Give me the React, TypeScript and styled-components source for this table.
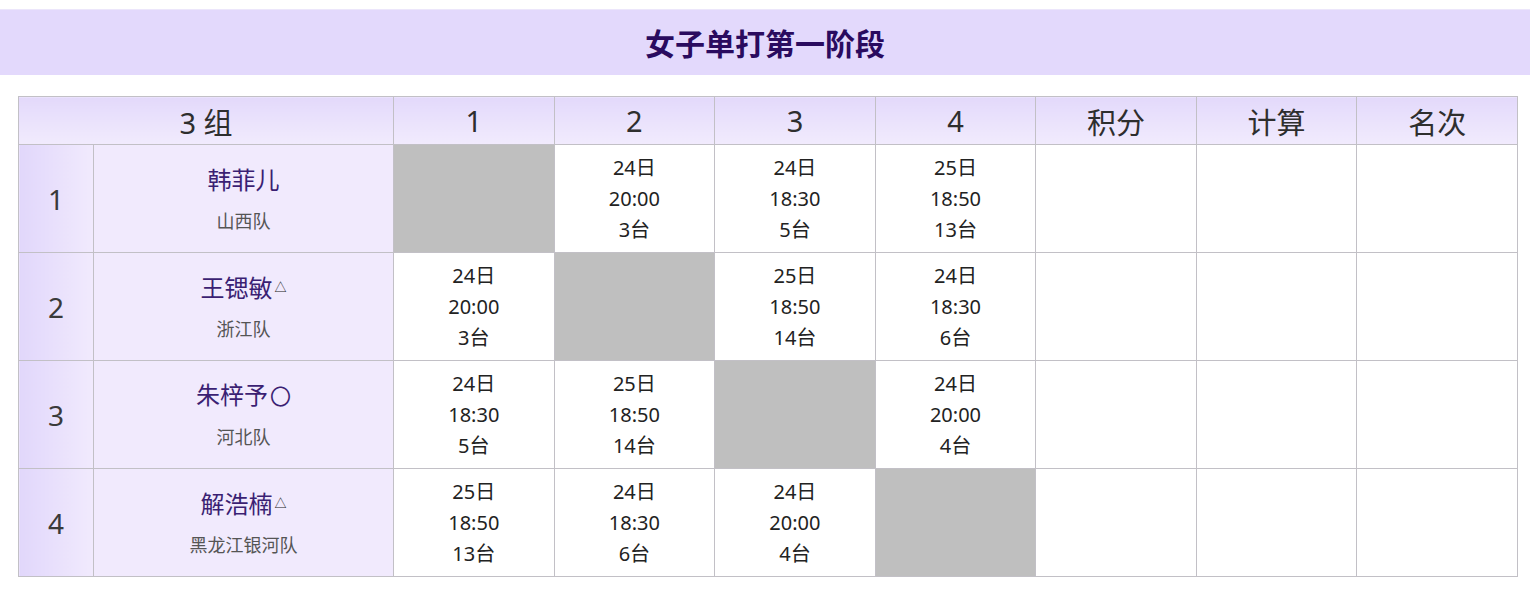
import React, { FC } from 'react';
import styled, { createGlobalStyle } from 'styled-components';

type Match = { day: string; time: string; court: string } | null;

type Player = {
  seed: number;
  name: string;
  mark?: 'triangle' | 'circle';
  team: string;
  matches: Match[];
};

const m = (day: string, time: string, court: string): Match => ({ day, time, court });

const players: Player[] = [
  {
    seed: 1,
    name: '韩菲儿',
    team: '山西队',
    matches: [null, m('24日', '20:00', '3台'), m('24日', '18:30', '5台'), m('25日', '18:50', '13台')],
  },
  {
    seed: 2,
    name: '王锶敏',
    mark: 'triangle',
    team: '浙江队',
    matches: [m('24日', '20:00', '3台'), null, m('25日', '18:50', '14台'), m('24日', '18:30', '6台')],
  },
  {
    seed: 3,
    name: '朱梓予',
    mark: 'circle',
    team: '河北队',
    matches: [m('24日', '18:30', '5台'), m('25日', '18:50', '14台'), null, m('24日', '20:00', '4台')],
  },
  {
    seed: 4,
    name: '解浩楠',
    mark: 'triangle',
    team: '黑龙江银河队',
    matches: [m('25日', '18:50', '13台'), m('24日', '18:30', '6台'), m('24日', '20:00', '4台'), null],
  },
];

const GlobalStyle = createGlobalStyle`
  html, body {
    margin: 0;
    padding: 0;
    background: #fff;
    font-family: "Noto Sans", "Noto Sans CJK SC", sans-serif;
  }
`;

const App: FC = () => {
  return (
    <Page>
      <GlobalStyle />
      <TitleBar>女子单打第一阶段</TitleBar>
      <TableWrap>
        <Grid>
          <colgroup>
            <col style={{ width: 75 }} />
            <col style={{ width: 300 }} />
            {Array.from({ length: 7 }).map((_, i) => (
              <col key={i} />
            ))}
          </colgroup>
          <thead>
            <tr>
              <HeadCell colSpan={2}>3 组</HeadCell>
              <HeadCell>1</HeadCell>
              <HeadCell>2</HeadCell>
              <HeadCell>3</HeadCell>
              <HeadCell>4</HeadCell>
              <HeadCell>积分</HeadCell>
              <HeadCell>计算</HeadCell>
              <HeadCell>名次</HeadCell>
            </tr>
          </thead>
          <tbody>
            {players.map((p) => (
              <tr key={p.seed}>
                <SeedCell>{p.seed}</SeedCell>
                <NameCell>
                  <Name>
                    {p.name}
                    {p.mark === 'triangle' && <Triangle>△</Triangle>}
                    {p.mark === 'circle' && <Circle>〇</Circle>}
                  </Name>
                  <Team>{p.team}</Team>
                </NameCell>
                {p.matches.map((match, i) =>
                  match ? (
                    <MatchCell key={i}>
                      <div>{match.day}</div>
                      <div>{match.time}</div>
                      <div>{match.court}</div>
                    </MatchCell>
                  ) : (
                    <BlankCell key={i} />
                  )
                )}
                <EmptyCell />
                <EmptyCell />
                <EmptyCell />
              </tr>
            ))}
          </tbody>
        </Grid>
      </TableWrap>
    </Page>
  );
};

const Page = styled.div`
  padding-top: 9px;
  width: 1530px;
`;

const TitleBar = styled.div`
  height: 66px;
  display: flex;
  align-items: center;
  justify-content: center;
  background: #e3d9fc;
  border-top: 1px solid #ece6fb;
  box-sizing: border-box;
  color: #2a0b5f;
  font-size: 30px;
  font-weight: 700;
  padding-bottom: 2px;
`;

const TableWrap = styled.div`
  padding: 21px 12px 0 18px;
`;

const Grid = styled.table`
  width: 1500px;
  border-collapse: collapse;
  table-layout: fixed;

  td,
  th {
    border: 1px solid #c2c0c6;
    padding: 0;
    text-align: center;
  }
`;

const HeadCell = styled.th`
  height: 47px;
  font-size: 29px;
  font-weight: 400;
  color: #2e2e2e;
  background: linear-gradient(to bottom, #e3d9fb, #f1ebfd);
`;

const SeedCell = styled.td`
  height: 107px;
  font-size: 28px;
  color: #3a3a3a;
  background: linear-gradient(to right, #e1d7fb, #f1eafd);
`;

const NameCell = styled.td`
  background: #f1eafd;
`;

const Name = styled.div`
  font-size: 24px;
  color: #3b1f73;
  line-height: 30px;
`;

const Triangle = styled.span`
  font-size: 12px;
  vertical-align: 5px;
  margin-left: 2px;
  color: #222;
`;

const Circle = styled.span`
  font-size: 21px;
  color: #3b1f73;
  margin-left: 2px;
`;

const Team = styled.div`
  margin-top: 12px;
  font-size: 18px;
  color: #555;
`;

const MatchCell = styled.td`
  background: #fff;
  font-size: 20px;
  line-height: 31px;
  color: #222;
`;

const BlankCell = styled.td`
  background: #bfbfbf;
`;

const EmptyCell = styled.td`
  background: #fff;
`;

export default App;
